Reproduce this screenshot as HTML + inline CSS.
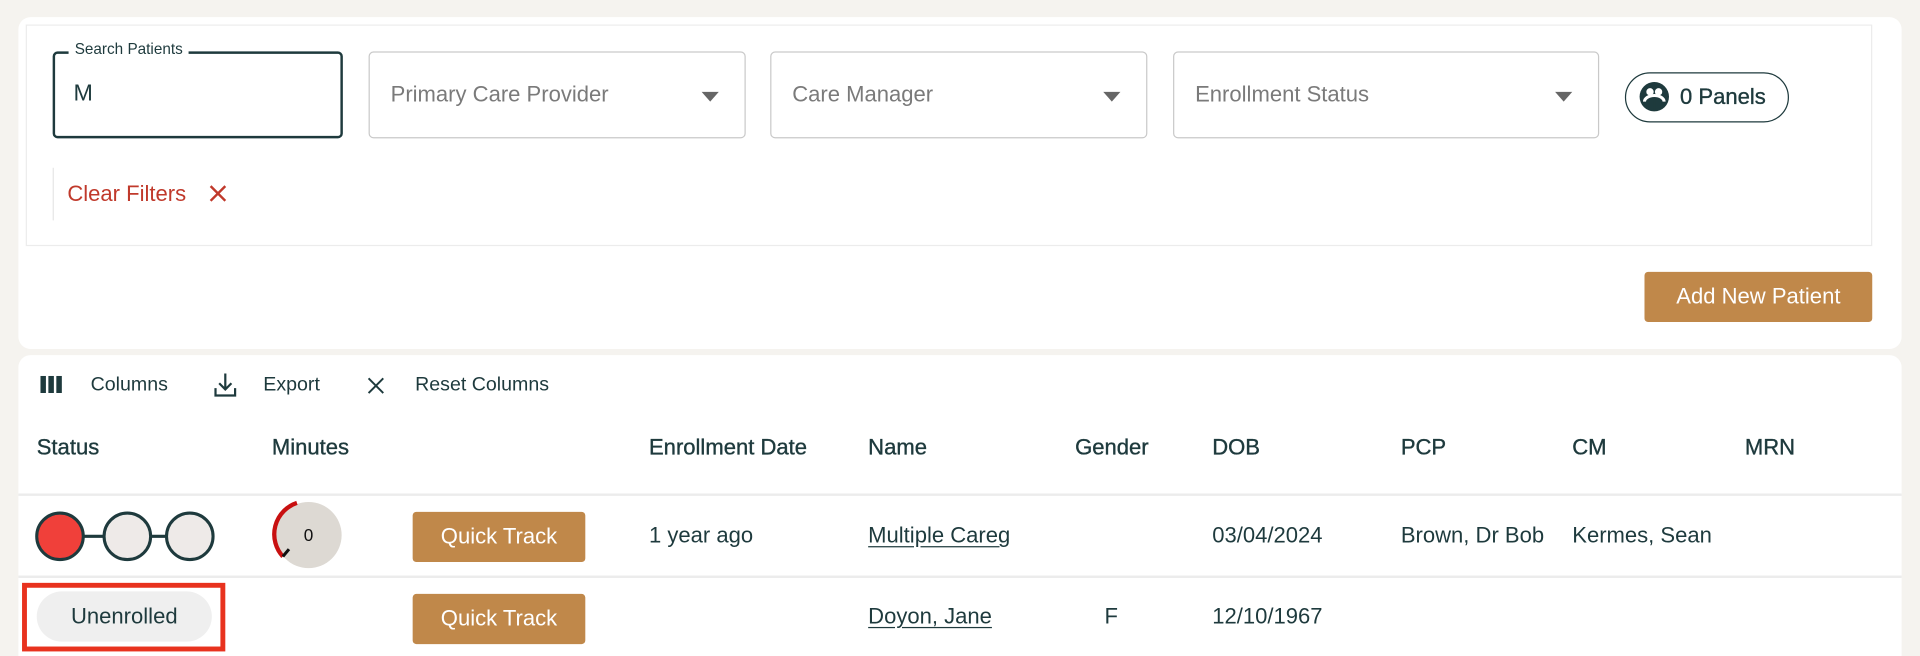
<!DOCTYPE html>
<html><head><meta charset="utf-8"><style>
*{box-sizing:border-box;margin:0;padding:0}
html,body{width:1920px;height:656px;overflow:hidden;background:#f5f3ef}
#w{position:absolute;left:0;top:0;width:1568px;height:536px;overflow:hidden;transform:scale(1.2244898);transform-origin:0 0;font-family:"Liberation Sans",sans-serif;color:#1e3a3d}
.a{position:absolute}
.card{background:#fff;border-radius:10px}
.sel{position:absolute;top:42px;height:71px;border:1px solid #c9c9c9;border-radius:4px;background:#fff}
.sel span{position:absolute;left:17px;top:24px;font-size:18px;color:#7a7a7a;white-space:nowrap}
.sel i{position:absolute;right:21px;top:32px;width:0;height:0;border-left:7px solid transparent;border-right:7px solid transparent;border-top:8px solid #666}
.btn{position:absolute;background:#c0884a;border-radius:3px;color:#fff;font-size:18px;text-align:center}
.t{position:absolute;white-space:nowrap}
.h{font-size:18px;top:355px;color:#1e3a3d;-webkit-text-stroke:0.3px #1e3a3d}
.c{font-size:17px;color:#1e3a3d}
.tb{font-size:16px;top:306px}
u{text-decoration:underline;text-underline-offset:3px}
</style></head><body><div id="w">
<div class="a card" style="left:15px;top:14px;width:1538px;height:271px"></div>
<div class="a" style="left:21px;top:20px;width:1508px;height:181px;border:1.5px solid #ececec"></div>
<div class="a" style="left:43px;top:42px;width:237px;height:71px;border:2px solid #1e3a3d;border-radius:4px"></div>
<div class="t" style="left:56px;top:33px;background:#fff;padding:0 5px;font-size:12.5px">Search Patients</div>
<div class="t" style="left:60px;top:66px;font-size:19px">M</div>
<div class="sel" style="left:301px;width:308px"><span>Primary Care Provider</span><i></i></div>
<div class="sel" style="left:629px;width:308px"><span>Care Manager</span><i></i></div>
<div class="sel" style="left:958px;width:348px"><span>Enrollment Status</span><i></i></div>
<div class="a" style="left:1327px;top:59px;width:134px;height:41px;border:1.5px solid #1e3a3d;border-radius:21px"></div>
<svg class="a" style="left:1338px;top:66px" width="26" height="26" viewBox="0 0 26 26"><circle cx="13" cy="13" r="12" fill="#1e3a3d"/><circle cx="9.5" cy="9" r="3" fill="#fff"/><circle cx="16.5" cy="9" r="3" fill="#fff"/><path d="M5 17a8 5 0 0 1 16 0" fill="none" stroke="#fff" stroke-width="2.5"/><path d="M13 14v10" stroke="#1e3a3d" stroke-width="2"/></svg>
<div class="t" style="left:1372px;top:69px;font-size:18px;-webkit-text-stroke:0.3px #1e3a3d">0 Panels</div>
<div class="a" style="left:43px;top:137px;width:1px;height:43px;background:#e6e6e6"></div>
<div class="t" style="left:55px;top:148px;font-size:18px;color:#c0392b">Clear Filters</div>
<svg class="a" style="left:170px;top:150px" width="16" height="16"><path d="M2 2L14 14M14 2L2 14" stroke="#c0392b" stroke-width="2"/></svg>
<div class="btn" style="left:1343px;top:222px;width:186px;height:41px;line-height:41px">Add New Patient</div>
<div class="a" style="left:15px;top:290px;width:1538px;height:246px;background:#fff;border-radius:10px 10px 0 0"></div>
<svg class="a" style="left:33px;top:307px" width="18" height="14"><rect x="0" y="0" width="4.5" height="14" fill="#1e3a3d"/><rect x="6.5" y="0" width="4.5" height="14" fill="#1e3a3d"/><rect x="13" y="0" width="4.5" height="14" fill="#1e3a3d"/></svg>
<div class="t c tb" style="left:74px">Columns</div>
<svg class="a" style="left:174px;top:303px" width="20" height="22"><path d="M10 2v13M5 10l5 5 5-5M2 14v6h16v-6" fill="none" stroke="#1e3a3d" stroke-width="1.8"/></svg>
<div class="t c tb" style="left:215px">Export</div>
<svg class="a" style="left:300px;top:308px" width="14" height="14"><path d="M1 1L13 13M13 1L1 13" stroke="#1e3a3d" stroke-width="1.6"/></svg>
<div class="t c tb" style="left:339px">Reset Columns</div>
<div class="t h" style="left:30px">Status</div>
<div class="t h" style="left:222px">Minutes</div>
<div class="t h" style="left:530px">Enrollment Date</div>
<div class="t h" style="left:709px">Name</div>
<div class="t h" style="left:878px">Gender</div>
<div class="t h" style="left:990px">DOB</div>
<div class="t h" style="left:1144px">PCP</div>
<div class="t h" style="left:1284px">CM</div>
<div class="t h" style="left:1425px">MRN</div>
<div class="a" style="left:15px;top:403px;width:1538px;height:1.5px;background:#ececec"></div>
<div class="a" style="left:15px;top:470px;width:1538px;height:1.5px;background:#ececec"></div>
<svg class="a" style="left:28px;top:416px" width="150" height="44"><path d="M40 22h18M95 22h18" stroke="#1e3a3d" stroke-width="2.5"/><circle cx="21" cy="22" r="19" fill="#f0403a" stroke="#1e3a3d" stroke-width="2.5"/><circle cx="76" cy="22" r="19" fill="#eeeae8" stroke="#1e3a3d" stroke-width="2.5"/><circle cx="127" cy="22" r="19" fill="#eeeae8" stroke="#1e3a3d" stroke-width="2.5"/></svg>
<svg class="a" style="left:218px;top:404px" width="66" height="66"><circle cx="34" cy="33" r="27" fill="#ddd9d3"/><path d="M24.5 6.7A27 27 0 0 0 13 50.5" fill="none" stroke="#c81010" stroke-width="3.5"/><path d="M13 50.5l5-6" stroke="#111" stroke-width="2.5"/><text x="34" y="38" font-size="14" text-anchor="middle" fill="#111" font-family="Liberation Sans">0</text></svg>
<div class="btn" style="left:337px;top:418px;width:141px;height:41px;line-height:41px">Quick Track</div>
<div class="t c" style="left:530px;top:427px;font-size:18px">1 year ago</div>
<div class="t c" style="left:709px;top:427px;font-size:18px"><u>Multiple Careg</u></div>
<div class="t c" style="left:990px;top:427px;font-size:18px">03/04/2024</div>
<div class="t c" style="left:1144px;top:427px;font-size:18px">Brown, Dr Bob</div>
<div class="t c" style="left:1284px;top:427px;font-size:18px">Kermes, Sean</div>
<div class="a" style="left:18px;top:476px;width:166px;height:56px;border:4px solid #e8321e"></div>
<div class="a" style="left:30px;top:483px;width:143px;height:41px;border-radius:21px;background:#efefef;font-size:18px;text-align:center;line-height:41px;color:#1e3a3d">Unenrolled</div>
<div class="btn" style="left:337px;top:485px;width:141px;height:41px;line-height:41px">Quick Track</div>
<div class="t c" style="left:709px;top:493px;font-size:18px"><u>Doyon, Jane</u></div>
<div class="t c" style="left:902px;top:493px;font-size:18px">F</div>
<div class="t c" style="left:990px;top:493px;font-size:18px">12/10/1967</div>
</div></body></html>
